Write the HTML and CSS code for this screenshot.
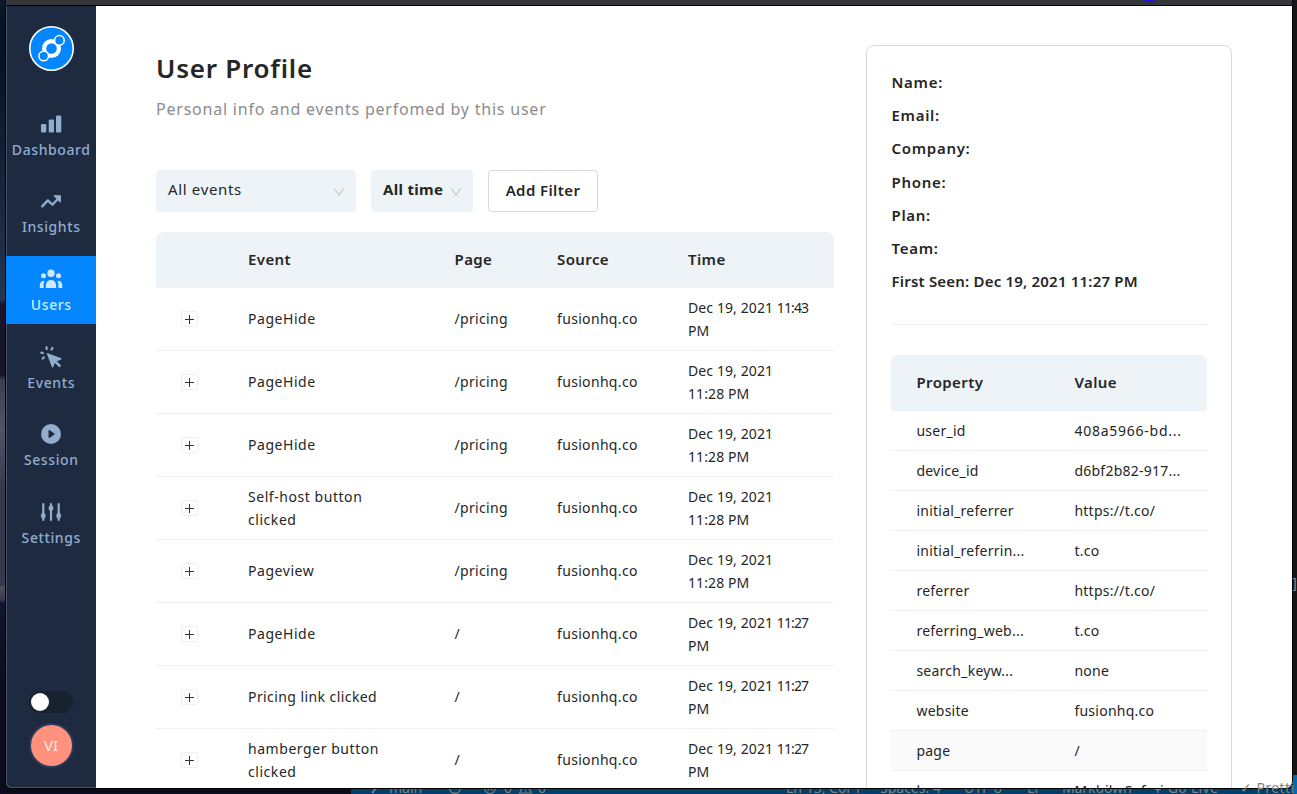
FILE: index.html
```
<!DOCTYPE html>
<html lang="en">
<head>
<meta charset="utf-8">
<title>User Profile</title>
<link rel="stylesheet" href="styles.css">
</head>
<body>
<div class="desktop">
  <div class="wallpaper"></div>
  <div class="tab-mark"></div>
  <div class="editor-edge"><span class="bracket">]</span></div>
  <div class="statusbar">
    <svg class="st s-branch" width="10" height="14" viewBox="0 0 10 14"><path d="M2 8c1-4 3-5 6-5M1 8l2-3" fill="none" stroke="currentColor" stroke-width="1.3"/></svg>
    <span class="st s-main">main</span>
    <svg class="st s-sync" width="14" height="14" viewBox="0 0 14 14"><circle cx="7" cy="7" r="5.5" fill="none" stroke="currentColor" stroke-width="1.3"/></svg>
    <svg class="st s-x" width="14" height="14" viewBox="0 0 14 14"><path d="M4.500 4.500l5 5M9.500 4.500l-5 5M12.500 7a5.500 5.500 0 1 1-11 0 5.500 5.500 0 0 1 11 0z" fill="none" stroke="currentColor" stroke-width="1.2"/></svg>
    <span class="st s-e0">0</span>
    <svg class="st s-warn" width="15" height="14" viewBox="0 0 15 14"><path d="M7.500 1.500l6 10.500h-12zM7.500 5v3.500M7.500 9.500v1.200" fill="none" stroke="currentColor" stroke-width="1.2"/></svg>
    <span class="st s-w0">0</span>
    <span class="st s-ln">Ln 13, Col 1</span>
    <span class="st s-sp">Spaces: 4</span>
    <span class="st s-utf">UTF-8</span>
    <span class="st s-lf">LF</span>
    <span class="st s-md">Markdown</span>
    <span class="st s-live">Ψ Go Live</span>
    <span class="st s-pr">✓ Pretti</span>
  </div>
  <div class="window">
    <nav class="sidebar">
      <div class="logo">
        <svg width="45" height="45" viewBox="0 0 45 45">
          <circle cx="22.500" cy="22.500" r="21.700" fill="#0486ff" stroke="#fff" stroke-width="1.600"/>
          <circle cx="22.500" cy="22.500" r="7.400" fill="none" stroke="#fff" stroke-width="4.200"/>
          <circle cx="30.400" cy="14.400" r="4.800" fill="#0486ff" stroke="#fff" stroke-width="1.500"/>
          <circle cx="14.700" cy="30" r="4.800" fill="#0486ff" stroke="#fff" stroke-width="1.500"/>
        </svg>
      </div>
      <a class="nav-item"><svg width="24" height="24" viewBox="0 0 24 24" fill="currentColor"><rect x="2" y="12" width="5.300" height="8.500" rx="1.200"/><rect x="9.700" y="7.500" width="5.300" height="13" rx="1.200"/><rect x="17" y="3.500" width="5.300" height="17" rx="1.200"/></svg><span>Dashboard</span></a>
      <a class="nav-item"><svg width="24" height="24" viewBox="0 0 24 24" fill="none" stroke="currentColor" stroke-width="2.400" stroke-linecap="round" stroke-linejoin="round"><path d="M3.200 17.300l5.600-5.900 4.600 4.300 6.600-7"/><path d="M15.300 6.800h6v6z" fill="currentColor" stroke-width="1.300"/></svg><span>Insights</span></a>
      <a class="nav-item active"><svg width="24" height="24" viewBox="0 0 24 24" fill="currentColor"><circle cx="12" cy="6.300" r="3.700"/><circle cx="4.500" cy="8.700" r="2.500"/><circle cx="19.500" cy="8.700" r="2.500"/><path d="M6.900 21v-3a5.100 5.100 0 0 1 10.200 0v3zM5.600 13.800c-1.300 1.700-1 4-1 7.200H.8v-3c0-2.700 2-4.200 4.800-4.200zM18.400 13.800c1.300 1.700 1 4 1 7.200h3.800v-3c0-2.700-2-4.200-4.800-4.200z"/></svg><span>Users</span></a>
      <a class="nav-item"><svg width="24" height="24" viewBox="0 0 24 24" fill="currentColor"><path d="M7.500 7.800l14.300 5.300c.9.400.8 1.300 0 1.600l-4 1.500 4.500 4.400-1.900 1.900-4.500-4.500-1.600 3.900c-.3.800-1.200.8-1.500 0z"/><path d="M7.400 2.200l.4 1.800M13.400 3l-.9 1.500M2.300 7.600l1.500.5M3.700 13.600l1.100-1.200" fill="none" stroke="currentColor" stroke-width="2.200" stroke-linecap="round"/></svg><span>Events</span></a>
      <a class="nav-item"><svg width="24" height="24" viewBox="0 0 24 24"><circle cx="12" cy="12" r="10" fill="currentColor"/><path d="M10.300 8.800v6.400l4.600-3.200z" fill="#1e2a40" stroke="#1e2a40" stroke-width="1.500" stroke-linejoin="round"/></svg><span>Session</span></a>
      <a class="nav-item"><svg width="24" height="24" viewBox="0 0 24 24" fill="none" stroke="currentColor" stroke-width="2.200" stroke-linecap="round"><path d="M4.300 4v16M12 4v16M19.700 4v16"/><path d="M4.300 15.500v.6M12 7.900v.6M19.700 15.500v.6" stroke-width="4.800"/></svg><span>Settings</span></a>
      <div class="bottom">
        <div class="switch"><div class="knob"></div></div>
        <div class="avatar">VI</div>
      </div>
    </nav>
    <main class="content">
      <section class="events">
        <h1>User Profile</h1>
        <p class="sub">Personal info and events perfomed by this user</p>
        <div class="filters">
          <div class="select wide"><span>All events</span><svg width="12" height="12" viewBox="0 0 12 12"><path d="M1.200 2.300l4.800 6.900 4.800-6.900" fill="none" stroke="currentColor"/></svg></div>
          <div class="select time"><span>All time</span><svg width="12" height="12" viewBox="0 0 12 12"><path d="M1.200 2.300l4.800 6.900 4.800-6.900" fill="none" stroke="currentColor"/></svg></div>
          <button class="add">Add Filter</button>
        </div>
        <div class="grid head"><i></i><b>Event</b><b>Page</b><b>Source</b><b>Time</b></div>
        <div class="grid row"><i class="plus"></i><span>PageHide</span><span>/pricing</span><span>fusionhq.co</span><span class="date">Dec 19, 2021 <em>11:43</em><br>PM</span></div>
        <div class="grid row"><i class="plus"></i><span>PageHide</span><span>/pricing</span><span>fusionhq.co</span><span class="date">Dec 19, 2021<br>11:28 PM</span></div>
        <div class="grid row"><i class="plus"></i><span>PageHide</span><span>/pricing</span><span>fusionhq.co</span><span class="date">Dec 19, 2021<br>11:28 PM</span></div>
        <div class="grid row"><i class="plus"></i><span>Self-host button<br>clicked</span><span>/pricing</span><span>fusionhq.co</span><span class="date">Dec 19, 2021<br>11:28 PM</span></div>
        <div class="grid row"><i class="plus"></i><span>Pageview</span><span>/pricing</span><span>fusionhq.co</span><span class="date">Dec 19, 2021<br>11:28 PM</span></div>
        <div class="grid row"><i class="plus"></i><span>PageHide</span><span>/</span><span>fusionhq.co</span><span class="date">Dec 19, 2021 <em>11:27</em><br>PM</span></div>
        <div class="grid row"><i class="plus"></i><span class="long">Pricing link clicked</span><span>/</span><span>fusionhq.co</span><span class="date">Dec 19, 2021 <em>11:27</em><br>PM</span></div>
        <div class="grid row"><i class="plus"></i><span>hamberger button<br>clicked</span><span>/</span><span>fusionhq.co</span><span class="date">Dec 19, 2021 <em>11:27</em><br>PM</span></div>
      </section>
      <aside class="card">
        <div class="info">
          <div>Name:</div><div>Email:</div><div>Company:</div><div>Phone:</div><div>Plan:</div><div>Team:</div><div class="seen">First Seen: Dec 19, 2021 11:27 PM</div>
        </div>
        <div class="props head"><b>Property</b><b>Value</b></div>
        <div class="props prow"><span>user_id</span><span class="uid">408a5966-bd...</span></div>
        <div class="props prow"><span>device_id</span><span>d6bf2b82-917...</span></div>
        <div class="props prow"><span>initial_referrer</span><span>https://t.co/</span></div>
        <div class="props prow"><span>initial_referrin...</span><span>t.co</span></div>
        <div class="props prow"><span>referrer</span><span>https://t.co/</span></div>
        <div class="props prow"><span>referring_web...</span><span>t.co</span></div>
        <div class="props prow"><span>search_keyw...</span><span>none</span></div>
        <div class="props prow"><span>website</span><span>fusionhq.co</span></div>
        <div class="props prow hover"><span>page</span><span>/</span></div>
        <div class="props prow"><span>browser</span><span>Mobile Safari</span></div>
      </aside>
    </main>
  </div>
</div>
</body>
</html>
```
FILE: styles.css
```
* { box-sizing: border-box; }
body { margin: 0; font-family: "Noto Sans", sans-serif; color: #262626; overflow: hidden; }
.desktop { position: relative; width: 1297px; height: 794px; overflow: hidden; background: #0a0b1c; padding: 6px 4px 6px 6px; }
.desktop::before { content: ""; position: absolute; left: 6px; top: 0; width: 1286px; height: 6px; background: #35363a; border-bottom: 1px solid #17151a; }
.tab-mark { position: absolute; left: 1143px; top: -5px; width: 13px; height: 7px; border-radius: 50%; background: #2314d8; z-index: 2; }
.wallpaper { position: absolute; left: 0; top: 0; width: 5px; height: 794px; background: linear-gradient(#101a2c 0, #071126 20px, #071126 60px, #1c2d46 240px, #22384f 300px, #17152c 304px, #17152c 375px, #3c3f54 380px, #50546a 430px, #35384d 490px, #35384d 585px, #50515f 587px, #35384d 600px, #0f1630 603px, #0a0b1c 700px); }
.editor-edge { position: absolute; left: 1293px; top: 0; width: 4px; height: 775px; background: #161616; overflow: hidden; }
.bracket { position: absolute; top: 572px; left: -1px; font-size: 15px; line-height: 20px; color: #888; }
.statusbar { position: absolute; left: 351px; top: 775px; right: 0; height: 19px; background: #033f69; color: #7b8384; font: 14px/18px "Noto Sans", sans-serif; }
.statusbar::after { content: ""; position: absolute; right: 0; top: 0; width: 4px; height: 19px; background: #0768ac; }
.st { position: absolute; top: 4px; white-space: nowrap; }
.s-branch { left: 20px; top: 10px; } .s-main { left: 38px; } .s-sync { left: 97px; top: 6px; }
.s-x { left: 132px; top: 6px; } .s-e0 { left: 153px; } .s-warn { left: 167px; top: 6px; } .s-w0 { left: 187px; }
.s-ln { left: 435px; } .s-sp { left: 529px; } .s-utf { left: 613px; } .s-lf { left: 676px; } .s-md { left: 711px; letter-spacing: -.1px; } .s-live { left: 801px; letter-spacing: .3px; } .s-pr { left: 889px; z-index: 1; letter-spacing: .4px; }
.window { position: relative; display: flex; width: 1286px; height: 782px; border-radius: 0 0 6px 6px; overflow: hidden; background: #fff; box-shadow: 0 0 0 1px #000; }
.window::after { content: ""; position: absolute; inset: -2px 1196px 0 0; border: 1px solid #48536a; border-top: 0; border-right: 0; border-radius: 0 0 0 6px; }
.sidebar { width: 90px; flex: none; background: #1e2a40; color: #92acce; display: flex; flex-direction: column; align-items: center; padding-top: 20px; }
.logo { height: 84.800px; margin-bottom: -10px; }
.logo svg, .nav-item svg { display: block; }
.nav-item { width: 90px; height: 68px; flex: none; margin-bottom: 9.600px; display: flex; flex-direction: column; align-items: center; padding-top: 11px; font-size: 14px; line-height: 20px; font-weight: 500; letter-spacing: .6px; }
.nav-item span { margin-top: 4px; padding-left: .5px; white-space: nowrap; }
.active { background: #0486ff; color: #d0e8ff; position: relative; z-index: 1; }
.bottom { margin-top: auto; padding-bottom: 20px; display: grid; justify-items: center; gap: 10px; }
.switch { width: 44px; height: 22px; border-radius: 11px; background: #17212f; padding: 2px; }
.knob { width: 18px; height: 18px; border-radius: 50%; background: #fff; }
.avatar { width: 45px; height: 45px; border: 2px solid #2a3b5c; border-radius: 50%; background: #ff917d; color: #ffe9e5; font-size: 15px; text-align: center; line-height: 41px; }
.content { flex: 1; display: flex; align-items: flex-start; gap: 32px; padding: 39px 60px 0; }
.events { width: 678px; flex: none; }
h1 { margin: 0; font-size: 26px; line-height: 46px; font-weight: 600; letter-spacing: .75px; }
.sub { margin: 6px 0 0; font-size: 16px; line-height: 24px; letter-spacing: .78px; color: #8c8c8c; }
.filters { display: flex; gap: 15px; margin: 49px 0 20px; height: 42px; }
.select { height: 42px; background: #edf3f6; border-radius: 4px; padding: 0 11px 0 12px; display: flex; align-items: center; justify-content: space-between; font-size: 15px; color: #262626; }
.select span { position: relative; top: -2px; }
.select svg { color: #b5b9bc; margin-top: 2px; }
.wide { width: 200px; letter-spacing: .65px; }
.time { width: 102px; font-weight: 700; letter-spacing: .3px; }
.add { width: 110px; padding: 0 0 3px; background: #fff; border: 1px solid #d9d9d9; border-radius: 4px; font: 600 15px "Noto Sans", sans-serif; letter-spacing: .4px; color: #262626; white-space: nowrap; }
.grid { display: grid; grid-template-columns: 92px 206.500px 102.500px 131px 1fr; align-items: center; }
.head { height: 56px; background: #edf3f6; border-radius: 8px 8px 0 0; font-size: 15px; align-items: center; padding-bottom: 2px; }
b { font-weight: 600; letter-spacing: .4px; }
.row { height: 63px; border-bottom: 1px solid #f0f0f0; padding-bottom: 1px; font-size: 14px; line-height: 23px; letter-spacing: .33px; white-space: nowrap; }
.row > span:nth-child(2) { letter-spacing: .55px; }
.row > .long:nth-child(2) { letter-spacing: .42px; }
.row > .date { letter-spacing: .1px; }
em { font-style: normal; letter-spacing: -.9px; }
.plus { width: 17px; height: 16px; margin: 1px 0 0 25px; border: 1px solid #f0f0f0; border-radius: 2px; background: linear-gradient(#333, #333) center / 9px 1px no-repeat, linear-gradient(#333, #333) center / 1px 9px no-repeat; }
.card { width: 366px; height: 800px; flex: none; border: 1px solid #d9d9d9; border-radius: 8px; padding: 20px 24px; }
.info { height: 258.500px; border-bottom: 1px solid #f0f0f0; margin-bottom: 30.500px; padding-left: .5px; font-size: 15px; line-height: 33.200px; font-weight: 600; letter-spacing: .7px; white-space: nowrap; }
.seen { letter-spacing: .2px; }
.props { display: grid; grid-template-columns: 158px 1fr; padding-left: 25.400px; align-items: center; }
.prow { height: 40px; border-bottom: 1px solid #f0f0f0; font-size: 14px; letter-spacing: .25px; white-space: nowrap; }
.uid { letter-spacing: .75px; }
.hover { background: #fafafa; }
```
